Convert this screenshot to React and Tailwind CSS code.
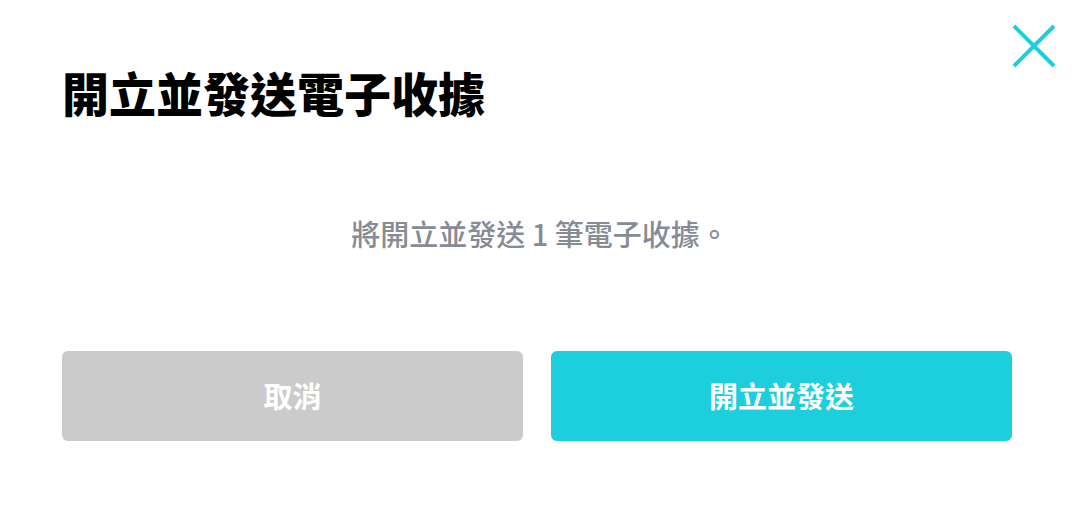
import React from 'react';

const App = () => {
  return (
    <div className="relative w-full h-[506px] bg-white px-[62px] font-['Noto_Sans_CJK_TC',_'Noto_Sans',_sans-serif]">
      {/* 關閉 */}
      <button className="absolute top-[24px] right-[24px] w-[44px] h-[44px] flex items-center justify-center" aria-label="close">
        <svg width="44" height="44" viewBox="0 0 44 44" fill="none" stroke="#1dcfdc" strokeWidth="4">
          <path d="M2 2L42 42M42 2L2 42" />
        </svg>
      </button>

      <h1 className="pt-[64px] text-[47px] leading-[56px] font-black text-black">
        開立並發送電子收據
      </h1>

      <p className="mt-[95px] text-center text-[29px] leading-[36px] font-medium text-[#878b95]">
        將開立並發送 1 筆電子收據。
      </p>

      <div className="mt-[100px] grid grid-cols-2 gap-[28px] w-[950px]">
        <button className="h-[90px] rounded-[6px] bg-[#cbcbcb] text-white text-[29px] font-bold">
          取消
        </button>
        <button className="h-[90px] rounded-[6px] bg-[#1dcfdc] text-white text-[29px] font-bold">
          開立並發送
        </button>
      </div>
    </div>
  );
};

export default App;
